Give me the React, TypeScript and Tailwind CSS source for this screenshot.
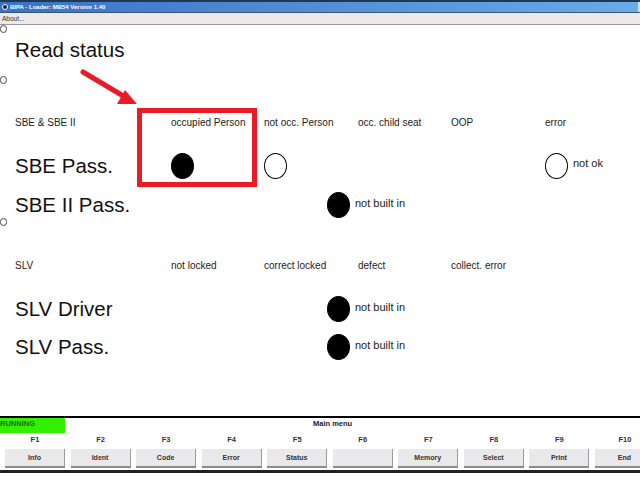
const columns = ['occupied Person', 'not occ. Person', 'occ. child seat', 'OOP', 'error'];
const slvColumns = ['not locked', 'correct locked', 'defect', 'collect. error'];
const keys = [
  ['F1', 'Info'],
  ['F2', 'Ident'],
  ['F3', 'Code'],
  ['F4', 'Error'],
  ['F5', 'Status'],
  ['F6', ''],
  ['F7', 'Memory'],
  ['F8', 'Select'],
  ['F9', 'Print'],
  ['F10', 'End'],
];

const COLS = 'grid grid-cols-[156px_93px_94px_93px_94px_95px] items-center pl-[15px]';

const Dot = ({ filled }: { filled?: boolean }) => (
  <span
    className={`block w-[23px] h-[26px] rounded-[50%] border border-black ${filled ? 'bg-black' : 'bg-white'}`}
  />
);

const HeaderRow = ({ title, labels }: { title: string; labels: string[] }) => (
  <div className={`${COLS} h-6 text-[10px] text-[#222]`}>
    <span>{title}</span>
    {labels.map((l) => (
      <span key={l}>{l}</span>
    ))}
  </div>
);

const NotBuiltRow = ({ title, className }: { title: string; className: string }) => (
  <div className={`flex items-center pl-[15px] ${className}`}>
    <span className="w-[312px] text-[20.5px] text-[#111]">{title}</span>
    <Dot filled />
    <span className="ml-[5px] -mt-[4px] text-[11px] text-[#222]">not built in</span>
  </div>
);

export default function App() {
  return (
    <div className="relative w-[640px] h-[480px] overflow-hidden bg-white flex flex-col font-['Liberation_Sans',Arial,sans-serif]">
      {/* title bar */}
      <div className="h-[13px] flex items-center gap-[2px] pl-[2px] border-t-2 border-t-[#1d3a55] border-b border-b-[#3a5578] bg-gradient-to-r from-[#3b72c4] to-[#6aabe8]">
        <span className="w-[6px] h-[6px] rounded-full bg-[#10233f] border border-white" />
        <span className="text-[6px] font-bold text-white leading-none">BIPA - Loader: MB54 Version 1.40</span>
        <span className="ml-auto w-[2px] h-full bg-[#cfe0f0]" />
      </div>

      {/* menu */}
      <div className="h-[12px] flex items-center pl-[2px] bg-[#ebe9ea] border-b border-b-[#9a9a9a] text-[6.5px] text-[#333]">
        About...
      </div>

      {/* status area */}
      <div className="flex-1 flex flex-col">
        <div className="h-[50px] flex items-center pl-[15px] text-[20.5px] text-[#111]">Read status</div>
        <div className="h-[35px]" />
        <HeaderRow title="SBE & SBE II" labels={columns} />
        <div className="h-[12px]" />

        <div className={`${COLS} h-[40px]`}>
          <span className="text-[20.5px] text-[#111] whitespace-nowrap">SBE Pass.</span>
          <Dot filled />
          <Dot />
          <span />
          <span />
          <div className="flex items-center gap-[5px]">
            <Dot />
            <span className="-mt-[6px] text-[11px] text-[#222]">not ok</span>
          </div>
        </div>

        <NotBuiltRow title="SBE II Pass." className="h-[38px]" />
        <div className="h-[29px]" />
        <HeaderRow title="SLV" labels={slvColumns} />
        <div className="h-[12px]" />
        <NotBuiltRow title="SLV Driver" className="h-[40px]" />
        <NotBuiltRow title="SLV Pass." className="h-[36px]" />
      </div>

      {/* function keys */}
      <div className="h-[57px] border-t-2 border-t-black border-b-[3px] border-b-[#222] flex flex-col">
        <div className="h-[15px] flex">
          <div className="w-[65px] bg-[#33f000] text-[7.5px] font-bold text-[#1c6b10] leading-[11px]">RUNNING</div>
          <div className="ml-[248px] text-[7.5px] font-bold text-[#222] leading-[11px]">Main menu</div>
        </div>
        <div className="pl-[5px] grid grid-cols-[repeat(10,60px)] gap-x-[5.55px]">
          {keys.map(([key, label]) => (
            <div key={key} className="flex flex-col items-center">
              <span className="h-[16px] text-[7.5px] font-bold text-[#333] leading-[14px]">{key}</span>
              <button className="w-[60px] h-[19px] pt-[1px] bg-[#e9e9ec] border-b-2 border-r border-b-[#8a8a8a] border-r-[#9a9a9a] text-[7px] font-bold text-[#333]">
                {label}
              </button>
            </div>
          ))}
        </div>
      </div>
      <div className="h-[7px] shrink-0" />

      {/* stray radio marks on the left edge */}
      <span className="absolute left-0 top-[25px] w-[7px] h-[8px] rounded-full border border-[#444] bg-white" />
      <span className="absolute left-0 top-[76px] w-[7px] h-[8px] rounded-full border border-[#444] bg-white" />
      <span className="absolute left-0 top-[218px] w-[7px] h-[8px] rounded-full border border-[#444] bg-white" />

      {/* red annotation */}
      <div className="absolute left-[137px] top-[108px] w-[120px] h-[79px] border-[5px] border-[#e81c26]" />
      <svg className="absolute left-[78px] top-[66px]" width="60" height="44" viewBox="0 0 60 44">
        <path d="M5 6 L47 31" stroke="#e81c26" strokeWidth="5" strokeLinecap="round" />
        <path d="M59 38 L39 38 L47 24 Z" fill="#e81c26" />
      </svg>
    </div>
  );
}
